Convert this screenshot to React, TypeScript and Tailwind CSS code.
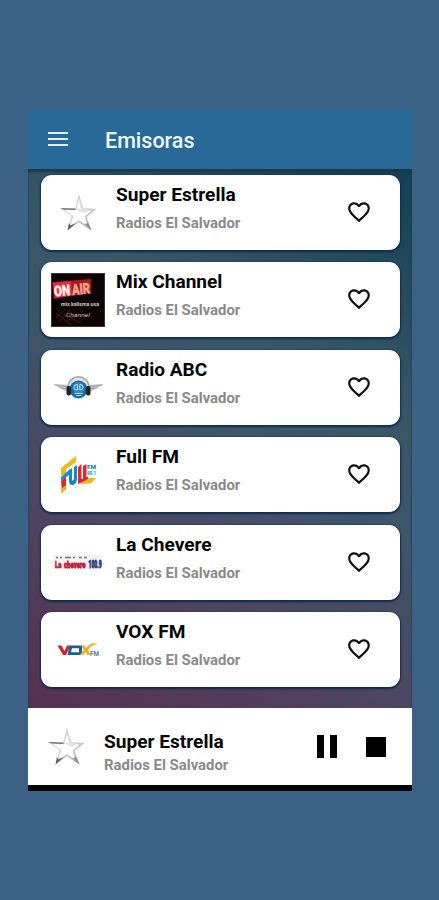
import React from 'react';

interface Station {
    name: string;
    group: string;
    logo: React.ReactNode;
}

const StarLogo = () => (
    <svg viewBox="0 0 54 54" className="w-[54px] h-[54px]">
        <defs>
            <linearGradient id="silver" x1="0" y1="0" x2="1" y2="1">
                <stop offset="0" stopColor="#a2a2a2" />
                <stop offset="0.4" stopColor="#dedede" />
                <stop offset="0.65" stopColor="#cccccc" />
                <stop offset="1" stopColor="#888888" />
            </linearGradient>
        </defs>
        <path
            d="M28 8 L32.5 22 L45.5 23 L35.5 31 L40.5 44.5 L28 36.5 L16.5 44.5 L20.5 30 L9 22 L24 22.5 Z M28 14 L25.5 24.5 L14 24 L22.5 30 L19 40 L28 34 L37 40.5 L33.5 30.5 L40.5 24.5 L30.5 24.5 Z"
            fill="url(#silver)"
            fillRule="evenodd"
        />
        <path d="M24 23 L32 22.5 L39 24 L33 27 Z" fill="#e4e4e4" />
        <path d="M9 22 L25 22.5 L24 24 L13 23.6 Z" fill="#777" />
        <path d="M16.5 44.5 L18 37 L19.5 39.5 L25 37 Z" fill="#5c5c5c" />
        <path d="M40.5 44.5 L37 37 L34 38 Z" fill="#8c8c8c" />
    </svg>
);

const OnAirLogo = () => (
    <svg viewBox="0 0 54 54" className="w-[54px] h-[54px]">
        <rect width="54" height="54" fill="#0d0304" />
        <path d="M1 9 L40 6 L40 20 L3 26 Z" fill="#a81923" />
        <path d="M2 10 L20 8 L21 22 L4 25 Z" fill="#df2f3c" />
        <g transform="rotate(-5 20 16)" fontFamily="Roboto, sans-serif" fontWeight="900">
            <text x="3" y="22" fontSize="15" textLength="16" lengthAdjust="spacingAndGlyphs" fill="#fff2e8" stroke="#fff2e8" strokeWidth="0.4">ON</text>
            <text x="21" y="22" fontSize="15" textLength="18" lengthAdjust="spacingAndGlyphs" fill="#f3a58c" stroke="#f3a58c" strokeWidth="0.4">AIR</text>
        </g>
        <text x="10" y="33" fontSize="5" fontWeight="700" fontFamily="Roboto, sans-serif" textLength="38" lengthAdjust="spacingAndGlyphs" fill="#d0c8c8">mix kalisma usa</text>
        <path d="M5 45 L14 37 M8 49 L19 37 M15 49 L26 41 M5 40 L20 52 M12 41 L30 50" stroke="#5e1a20" strokeWidth="0.8" fill="none" />
        <text x="15" y="43.5" fontSize="4.5" fontStyle="italic" fontFamily="Roboto, sans-serif" textLength="24" lengthAdjust="spacingAndGlyphs" fill="#d6b8b8">Channel</text>
        <rect x="0.5" y="0.5" width="53" height="53" fill="none" stroke="#55504f" strokeWidth="0.6" />
    </svg>
);

const AbcLogo = () => (
    <svg viewBox="0 0 54 54" className="w-[54px] h-[54px]">
        <path d="M2 24 L20 25 L20 33 L14 31 Z" fill="#c0c2c4" />
        <path d="M53 24 L35 25 L35 33 L41 31 Z" fill="#c0c2c4" />
        <path d="M4 25 L19 27 M9 28 L19 29 M51 25 L36 27 M46 28 L36 29" stroke="#909498" strokeWidth="0.7" />
        <path d="M17 28 C17 13 38 13 38 28" fill="#e3e0dc" stroke="#a8a8a8" strokeWidth="1.6" />
        <circle cx="27.5" cy="29.5" r="9" fill="#1769a8" />
        <circle cx="27.5" cy="28" r="6" fill="#2b86c4" />
        <path d="M26.5 24.5 Q23 24 23 27.5 Q23 30 26.5 30 Z M28.8 24.5 Q32 24 32 27.5 Q32 30 28.8 30 Z M23.5 33.5 H32 M25 35.5 H30.5" stroke="#b5e0f5" strokeWidth="1" fill="none" />
        <rect x="15.5" y="26" width="4.5" height="9.5" rx="2" fill="#22232a" />
        <rect x="35" y="26" width="4.5" height="9.5" rx="2" fill="#22232a" />
    </svg>
);

const FullLogo = () => (
    <svg viewBox="0 0 54 54" className="w-[54px] h-[54px]">
        <path d="M10 20 L25 8 L25 14 L15 21 L15 25 L10 28 Z" fill="#f2b51d" />
        <path d="M10 29 L18 22 L20 21 L20 25 L14 30 L10 33 Z" fill="#1c8cc8" />
        <path d="M10 33 L15 29 L15 41 L11 44 Z" fill="#d92a2f" />
        <path d="M10 41 L15 37 L14.5 41.5 L10.5 46 Z" fill="#f2b51d" />
        <path d="M18 22 L21 20 V32 Q21 34 23 31 V19 L26 17 V32 Q25 37 21 37 Q18 37 18 33 Z" fill="#1687c5" />
        <path d="M27 19 L30.5 16 V31 H32 V34 L27 36 Z M32 18 L35.5 16 V29 H37 V32 L32 34 Z" fill="#dc2931" />
        <path d="M29 36 L38 30 H45 L40 35.5 Z" fill="#f2b51d" />
        <text x="36" y="21" fontSize="6" fontWeight="900" fontFamily="Roboto, sans-serif" textLength="9" lengthAdjust="spacingAndGlyphs" fill="#1687b8">FM</text>
        <text x="36" y="26.5" fontSize="5" fontWeight="900" fontFamily="Roboto, sans-serif" textLength="9" lengthAdjust="spacingAndGlyphs" fill="#31a0c4">90.1</text>
    </svg>
);

const ChevereLogo = () => (
    <svg viewBox="0 0 54 54" className="w-[54px] h-[54px]">
        <rect x="2.5" y="20" width="49" height="14" fill="#f3f1f2" />
        <path d="M5 22.5 h2 m2 0 h2 m3 0 h6 m2 0 h2 m4 0 h3 m2 0 h3" stroke="#77717a" strokeWidth="1.6" />
        {/* short letters stretched to the height of the banner */}
        <g fontFamily="Roboto, sans-serif" fontWeight="900">
            <text transform="translate(4 32.5) scale(1 1.4)" fontSize="6" fill="#b51e45" stroke="#b51e45" strokeWidth="0.4">La</text>
            <text transform="translate(13 32.5) scale(1 1.4)" fontSize="6" fill="#c41c42" stroke="#c41c42" strokeWidth="0.6">chevere</text>
            <text transform="translate(37.5 32.5) scale(1 2.3)" fontSize="5" fill="#26357b" stroke="#26357b" strokeWidth="0.4">100.9</text>
        </g>
    </svg>
);

const VoxLogo = () => (
    <svg viewBox="0 0 54 54" className="w-[54px] h-[54px]">
        <path d="M6.5 23.5 H10.5 L13.5 29 L16 23.5 H19.5 L15 33 H12 Z" fill="#cf252c" />
        <path d="M18.5 23.5 H31 V33 H16.5 Z M21 26.2 L20 30.3 H28 V26.2 Z" fill="#165fa2" fillRule="evenodd" />
        <path d="M30 23.5 H33.5 L35 26 Q40 19.5 47 22 Q41 22 37 28 L39.5 33 H36.5 L34.5 30 L32 33 H28.5 L33 28 Z" fill="#efaf1d" />
        <text x="39" y="33.5" fontSize="8" fontWeight="700" fontFamily="Roboto, sans-serif" textLength="9" lengthAdjust="spacingAndGlyphs" fill="#657987">FM</text>
    </svg>
);

const stations: Station[] = [
    { name: 'Super Estrella', group: 'Radios El Salvador', logo: <StarLogo /> },
    { name: 'Mix Channel', group: 'Radios El Salvador', logo: <OnAirLogo /> },
    { name: 'Radio ABC', group: 'Radios El Salvador', logo: <AbcLogo /> },
    { name: 'Full FM', group: 'Radios El Salvador', logo: <FullLogo /> },
    { name: 'La Chevere', group: 'Radios El Salvador', logo: <ChevereLogo /> },
    { name: 'VOX FM', group: 'Radios El Salvador', logo: <VoxLogo /> },
];

const HeartIcon = () => (
    <svg viewBox="0 0 24 24" className="w-[26px] h-[26px]" fill="#111">
        <path d="M16.5 3c-1.74 0-3.41.81-4.5 2.09C10.91 3.81 9.24 3 7.5 3 4.42 3 2 5.42 2 8.5c0 3.78 3.4 6.86 8.55 11.54L12 21.35l1.45-1.32C18.6 15.36 22 12.28 22 8.5 22 5.42 19.58 3 16.5 3zm-4.4 15.55l-.1.1-.1-.1C7.14 14.24 4 11.39 4 8.5 4 6.5 5.5 5 7.5 5c1.54 0 3.04.99 3.57 2.36h1.87C13.46 5.99 14.96 5 16.5 5c2 0 3.5 1.5 3.5 3.5 0 2.89-3.14 5.74-7.9 10.05z" />
    </svg>
);

const StationCard = ({ station }: { station: Station }) => (
    <li className="flex h-[75px] shrink-0 rounded-[11px] bg-white pl-[10px] shadow-[0_1px_2px_1px_#102b4b]">
        <div className="pt-[10.5px]">{station.logo}</div>
        <div className="ml-[11px] flex-1 pt-[8px]">
            <h2 className="text-[19.1px] leading-[24px] font-bold text-[#050505] whitespace-nowrap">{station.name}</h2>
            <p className="mt-[6px] text-[14.9px] leading-[20px] font-bold text-[#8a8a8a] whitespace-nowrap">{station.group}</p>
        </div>
        <button className="mr-[28.5px] flex items-center pb-px" aria-label="Favorito">
            <HeartIcon />
        </button>
    </li>
);

const App = () => {
    return (
        <div className="h-[900px] w-[439px] overflow-hidden bg-[#3b6186] pt-[109px] pl-[28px] font-['Roboto',sans-serif]">
            <div className="flex h-[682px] w-[384px] flex-col bg-black">
                <header className="flex h-[60px] shrink-0 items-center bg-[#286997] pl-[20px] text-[#eef6fa]">
                    <button className="flex w-[20px] flex-col gap-[3.5px]" aria-label="Menu">
                        <span className="h-[2.5px] bg-[#e4f0f7]" />
                        <span className="h-[2.5px] bg-[#e4f0f7]" />
                        <span className="h-[2.5px] bg-[#e4f0f7]" />
                    </button>
                    <h1 className="ml-[37px] pt-[3px] text-[21.5px] leading-[28px] font-medium">Emisoras</h1>
                </header>

                <main className="h-[539px] shrink-0 bg-[linear-gradient(210deg,#133f56_0%,#385766_33%,#3d566a_48%,#4d4763_70%,#573052_100%)] pt-[6px] pr-[12px] pl-[13px] shadow-[inset_0_3px_3px_#17394d]">
                    <ul className="flex flex-col gap-[12.4px]">
                        {stations.map((station) => (
                            <StationCard key={station.name} station={station} />
                        ))}
                    </ul>
                </main>

                <footer className="flex h-[77px] shrink-0 bg-white pl-[11px]">
                    <div className="pt-[12px]">
                        <StarLogo />
                    </div>
                    <div className="ml-[11px] flex-1 pt-[22px]">
                        <h2 className="text-[19.1px] leading-[24px] font-bold text-[#050505] whitespace-nowrap">Super Estrella</h2>
                        <p className="text-[14.9px] leading-[22px] font-bold text-[#8a8a8a] whitespace-nowrap">Radios El Salvador</p>
                    </div>
                    <div className="mr-[26px] flex gap-[29px] pt-[27px]">
                        <button className="flex h-[23px] gap-[6px]" aria-label="Pausa">
                            <span className="h-[23px] w-[7px] bg-black" />
                            <span className="h-[23px] w-[7px] bg-black" />
                        </button>
                        <button className="mt-[2px] h-[20px] w-[20px] bg-black" aria-label="Detener" />
                    </div>
                </footer>
            </div>
        </div>
    );
};

export default App;
